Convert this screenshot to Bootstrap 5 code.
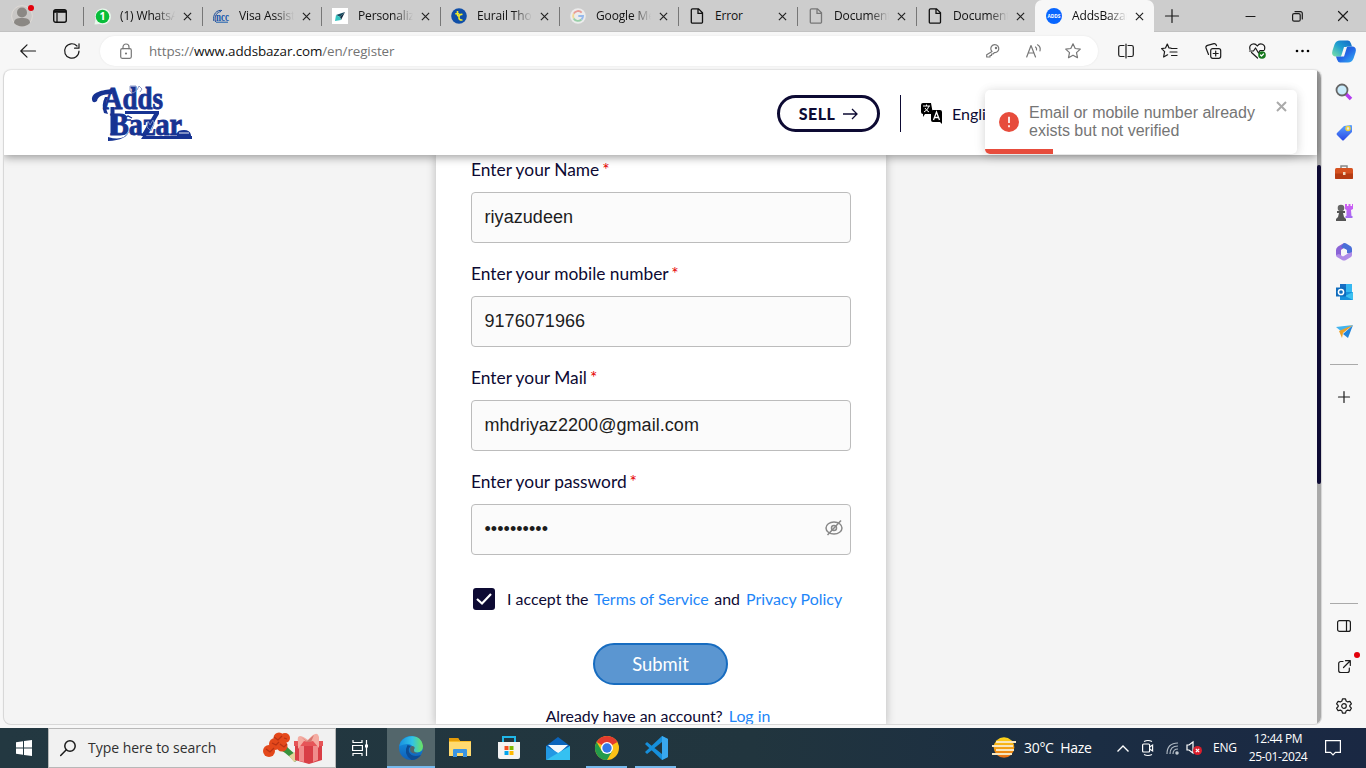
<!DOCTYPE html>
<html lang="en">
<head>
<meta charset="utf-8">
<meta name="viewport" content="width=device-width, initial-scale=1">
<title>AddsBazar</title>
<link href="https://cdn.jsdelivr.net/npm/bootstrap@5.3.0/dist/css/bootstrap.min.css" rel="stylesheet">
<style>
body{width:1366px;height:768px;overflow:hidden;background:#f7f7f7;font-family:"Open Sans","Noto Sans",sans-serif;font-size:12px;line-height:1.2;color:#111}
svg{display:block;flex:none;overflow:visible}
.ln{fill:none;stroke:#1b1b1b;stroke-width:1.2;stroke-linecap:round;stroke-linejoin:round}
/* tab strip */
.tabstrip{height:32px;background:#cdcdcd;box-shadow:inset 0 -1px #c2c2c2}
.strip-tools{width:83px}
.dot-red{width:6px;height:6px;border-radius:50%;background:#e3000b;position:absolute}
.tab-item{width:119px;height:32px;padding-left:11px;position:relative;flex:none}
.tab-item::before{content:"";position:absolute;left:0;top:7px;width:1px;height:19px;background:#777}
.tab-item.current{background:#f7f7f7;border-radius:7px 7px 0 0}
.tab-item.current::before{display:none}
.tab-name{width:55px;margin-left:9px;margin-right:8px;overflow:hidden;white-space:nowrap;line-height:20px;font-size:12px;letter-spacing:-.15px;-webkit-mask-image:linear-gradient(90deg,#000 65%,transparent);mask-image:linear-gradient(90deg,#000 65%,transparent)}
.tab-name.whole{-webkit-mask-image:none;mask-image:none}
/* toolbar */
.toolbar{height:38px}
.address{width:998px;height:30px;border-radius:15px;background:#fff;margin-left:20px;color:#737373;font-size:13.4px;box-shadow:0 0 2px #e4e4e4}
.address b{font-weight:400;color:#111}
.address .ln{stroke:#777}
/* viewport */
.viewport{width:1319px;height:655px;margin-left:3px;border:1px solid #d8d8d8;border-top:0;border-radius:8px;overflow:hidden;background:#f4f4f4;font-family:Lato,sans-serif;color:#0d0a33;box-shadow:0 -1px 1px #e2e2e2}
.site{width:1313px;flex:none}
.scrollbar-rail{width:5px;background:#a9a9a9;padding-top:95px}
.scrollbar-thumb{height:319px;background:#0d0a33;border-radius:3px}
.masthead{height:85px;background:#fff;box-shadow:0 2px 9px rgba(0,0,0,.4);position:relative;z-index:2;padding-left:87px}
.sell{width:103px;height:37px;border:3px solid #0d0a33;border-radius:19px;font-size:16px;font-weight:900;letter-spacing:.5px;margin-left:585px;margin-top:2px}
.rule{width:1px;height:37px;background:#0d0a33;margin:2px 20px 0}
.lang{font-size:16px;padding-top:2px}
.panel{width:450px;height:570px;margin-left:432px;background:#fff;padding:4px 35px 0;box-shadow:0 0 9px rgba(0,0,0,.25);overflow:hidden}
.field{height:104px}
.field label{display:block;height:33px;line-height:22px;font-size:17.35px}
.req{color:#e60000;margin-left:-1.5px}
.field .form-control{height:51px;border:1px solid #bcbcbc;border-radius:4px;background:#fbfbfb;font:18px "Liberation Sans",Arial,sans-serif;padding:0 12.5px;color:#1d1d1d;display:flex;align-items:center;letter-spacing:.05px}
.panel a{color:#1e86f8;text-decoration:none}
.accept{height:22px;margin-top:13px;font-size:15.95px;padding-left:2px;white-space:nowrap}
.tick{width:22px;height:22px;background:#0d0a33;border-radius:3px}
.send{width:135px;height:42px;border:2px solid #176cc0;border-radius:21px;background:#5b96d1;color:#fff;font-size:18.4px;margin:33px 0 0 122px}
.login-line{font-size:15.9px;margin-top:20px;line-height:22px;padding-right:6px}
/* toast */
.notice{position:absolute;z-index:5;left:985px;top:90px;width:312px;height:64px;border-radius:5px;overflow:hidden;background:#fff;color:#757575;font:16px/18px "Liberation Sans",Arial,sans-serif;box-shadow:0 1px 10px rgba(0,0,0,.12),0 2px 15px rgba(0,0,0,.06)}
.notice-bar{width:68px;height:5px;background:#e74c3c;position:absolute;left:0;bottom:0}
/* side rail */
.side{width:44px;height:655px;padding-top:12px}
.side .slot{height:40px;width:44px;display:flex;justify-content:center;align-items:center;position:relative;flex:none}
.side hr{width:28px;margin:0;border-top:1px solid #aaa;opacity:1;flex:none}
/* taskbar */
.taskbar{height:40px;margin-top:3px;background:linear-gradient(90deg,#233841 0,#21353e 55%,#1b2d43 80%,#1a2843);color:#fff}
.searchbox{width:288px;height:40px;background:#f1f1f1;border:1px solid #b8b8b8;color:#303030;font-size:14px}
.app{width:49px;height:40px;display:flex;align-items:center;justify-content:center;position:relative;flex:none}
.app.open::after{content:"";position:absolute;bottom:0;left:4px;right:4px;height:2px;background:#76b9ed}
.app.focus{width:48px;background:#53666b}.app.focus::after{left:0;right:0}
.clock{font-size:12px;line-height:18px;width:62px;letter-spacing:-.4px;white-space:nowrap}
</style>
</head>
<body>
<svg width="0" height="0" class="position-absolute">
 <defs>
  <symbol id="x" viewBox="0 0 10 10"><path d="M1 1l8 8M9 1L1 9" fill="none" stroke="#222" stroke-width="1.3"/></symbol>
  <symbol id="doc" viewBox="0 0 16 16"><path d="M3.5.8h6l4 4v9.2a1.2 1.2 0 0 1-1.2 1.2H3.5A1.2 1.2 0 0 1 2.3 14V2A1.2 1.2 0 0 1 3.5.8zM9 1v4.3h4.4" fill="none" stroke="currentColor" stroke-width="1.3"/></symbol>
  <linearGradient id="gTag" x2="0" y2="1"><stop stop-color="#5aa2ff"/><stop offset="1" stop-color="#2b49e6"/></linearGradient>
  <linearGradient id="gPur" x2="0" y2="1"><stop stop-color="#d45cf5"/><stop offset="1" stop-color="#a06bf0"/></linearGradient>
  <linearGradient id="gCop" x1="1" y1="0" x2="0" y2="1"><stop stop-color="#1466c8"/><stop offset=".5" stop-color="#1f9fd0"/><stop offset="1" stop-color="#7de3a5"/></linearGradient>
  <linearGradient id="gCop2" x2="1" y2="1"><stop stop-color="#1b50c4"/><stop offset=".5" stop-color="#2467e6"/><stop offset="1" stop-color="#35b5f4"/></linearGradient>
  <linearGradient id="gSun" x2="0" y2="1"><stop stop-color="#ffd91a"/><stop offset="1" stop-color="#e76c13"/></linearGradient>
  <linearGradient id="gEdge" x2="1"><stop stop-color="#1890e0"/><stop offset=".55" stop-color="#32c3e6"/><stop offset="1" stop-color="#6de35c"/></linearGradient>
  <linearGradient id="gEdge2" x2="0" y2="1"><stop stop-color="#1597e5"/><stop offset="1" stop-color="#0f5fb8"/></linearGradient>
 </defs>
</svg>

<div class="tabstrip d-flex">
 <div class="strip-tools d-flex align-items-center position-relative">
  <svg width="22" height="22" viewBox="0 0 22 22" style="margin-left:11px"><circle cx="11" cy="11" r="10.4" fill="#c9c7c5" stroke="#dedad6"/><circle cx="11" cy="7.5" r="5" fill="#8b8884"/><path d="M3 18c0-4 3-5 8-5s8 1 8 5c-2 2-5 3.500-8 3.500S5 20 3 18z" fill="#8b8884"/></svg>
  <span class="dot-red" style="left:28px;top:5px"></span>
  <svg width="14" height="14" viewBox="0 0 14 14" style="margin-left:20px"><rect x=".7" y=".7" width="12.600" height="12.600" rx="2" fill="none" stroke="#111" stroke-width="1.400"/><path d="M1 2.500h12" stroke="#111" stroke-width="2.600"/><path d="M4 4v9" stroke="#111" stroke-width="1.300"/></svg>
 </div>
 <div class="tab-item d-flex align-items-center"><svg width="17" height="17" viewBox="0 0 17 17"><path d="M.5 16.500l1-5A8 8 0 1 1 6 16z" fill="#e9f7ec"/><circle cx="8.500" cy="8.500" r="6.800" fill="#08bd3a"/><text x="8.500" y="12.300" font-size="10.500" font-weight="700" fill="#fff" text-anchor="middle">1</text></svg><span class="tab-name">(1) WhatsApp</span><svg width="9" height="9"><use href="#x"/></svg></div>
 <div class="tab-item d-flex align-items-center"><svg width="16" height="16" viewBox="0 0 16 16"><path d="M.8 13C-.5 6 4 1.500 9 2.500M2.500 14C1 8 4 4 8 3.500" stroke="#1d4f9b" fill="none"/><text x="3" y="12.500" font-size="12" font-weight="700" font-family="Liberation Serif" fill="#1557ad" textLength="13" lengthAdjust="spacingAndGlyphs">ncc</text><path d="M3 14.200h12" stroke="#1b5dad"/></svg><span class="tab-name" style="margin-left:10px">Visa Assistance</span><svg width="9" height="9"><use href="#x"/></svg></div>
 <div class="tab-item d-flex align-items-center"><svg width="16" height="16" viewBox="0 0 16 16"><path fill="#fff" d="M0 0h16v16H0z"/><path d="M13 4L4 7l4 2z" fill="#154c60"/><path d="M13 4L8 9l1 3z" fill="#102a40"/><path d="M4 7l-1 6 5-4zM3 13l6-1-1-3z" fill="#35c4c1"/></svg><span class="tab-name" style="margin-left:10px">Personalized</span><svg width="9" height="9"><use href="#x"/></svg></div>
 <div class="tab-item d-flex align-items-center"><svg width="16" height="16" viewBox="0 0 16 16"><circle cx="8" cy="8" r="7.800" fill="#104fa8"/><path d="M6.500 3v3.500q0 2 2 1.500M4.300 5.700h4M11.500 6.500q-3-.5-3.500 2-.5 4 3.500 3.500" stroke="#f4ea29" stroke-width="1.600" fill="none"/></svg><span class="tab-name" style="margin-left:10px">Eurail Thomas</span><svg width="9" height="9"><use href="#x"/></svg></div>
 <div class="tab-item d-flex align-items-center"><svg width="16" height="16" viewBox="0 0 16 16"><circle cx="8" cy="8" r="7.800" fill="#ececec"/><g fill="none" stroke-width="1.900"><path d="M11.700 4.600A5 5 0 0 0 3.700 5.600" stroke="#e89c95"/><path d="M3.700 5.600a5 5 0 0 0 0 4.800" stroke="#f2d995"/><path d="M3.700 10.400A5 5 0 0 0 11.500 11.500" stroke="#98cfa8"/><path d="M11.500 11.500A5 5 0 0 0 13 8H8.300" stroke="#97b9ec"/></g></svg><span class="tab-name" style="margin-left:10px">Google Meet</span><svg width="9" height="9"><use href="#x"/></svg></div>
 <div class="tab-item d-flex align-items-center"><svg width="16" height="16"><use href="#doc"/></svg><span class="tab-name whole" style="margin-left:10px">Error</span><svg width="9" height="9"><use href="#x"/></svg></div>
 <div class="tab-item d-flex align-items-center"><svg width="16" height="16" color="#777"><use href="#doc"/></svg><span class="tab-name" style="margin-left:10px">Document</span><svg width="9" height="9"><use href="#x"/></svg></div>
 <div class="tab-item d-flex align-items-center"><svg width="16" height="16"><use href="#doc"/></svg><span class="tab-name" style="margin-left:10px">Document</span><svg width="9" height="9"><use href="#x"/></svg></div>
 <div class="tab-item current d-flex align-items-center"><svg width="16" height="16" viewBox="0 0 16 16"><circle cx="8" cy="8" r="8" fill="#0866ff"/><text x="1.500" y="10" font-size="5.500" font-weight="700" fill="#fff" textLength="13" lengthAdjust="spacingAndGlyphs">ADDS</text></svg><span class="tab-name" style="margin-left:10px">AddsBazar</span><svg width="9" height="9"><use href="#x"/></svg></div>
 <div class="d-flex align-items-center flex-grow-1">
  <svg class="ln" width="14" height="14" style="margin-left:11px"><path d="M7 .5v13M.5 7h13"/></svg>
  <svg class="ln" width="10" height="10" style="margin-left:67px"><path d="M0 5.500h9"/></svg>
  <svg class="ln" width="11" height="11" style="margin-left:36px"><rect x=".6" y="2.600" width="7.600" height="7.600" rx="1.500"/><path d="M3 .6h5.500a1.800 1.800 0 0 1 1.800 1.800V8"/></svg>
  <svg class="ln" width="10" height="10" style="margin-left:35px"><path d="M.5.500l9 9M9.500.500l-9 9"/></svg>
 </div>
</div>

<div class="toolbar d-flex align-items-center">
 <svg class="ln" width="16" height="14" style="margin-left:20px"><path d="M15.500 7H.8M7 .8L.8 7 7 13.200"/></svg>
 <svg class="ln" width="16" height="16" viewBox="0 0 16 16" style="margin-left:28px"><path d="M15 8a7.200 7.200 0 1 1-2-5M15 .800v4.400h-4.400"/></svg>
 <div class="address d-flex align-items-center">
  <svg class="ln" width="12" height="15" style="margin-left:20px"><rect x=".7" y="4.700" width="10.600" height="9.600" rx="1.500"/><path d="M3 4.700V3a3 3 0 0 1 6 0v1.700"/><circle cx="6" cy="9.500" r=".5"/></svg>
  <span class="url-text" style="margin-left:17px;width:830px;letter-spacing:-.1px">https://<b>www.addsbazar.com</b>/en/register</span>
  <svg class="ln" width="14" height="14" viewBox="0 0 14 14" style="margin-left:7px"><path d="M6 7.500A4 4 0 1 1 8.300 8.600L7 10H5.500v1.500H4V13H.7v-2.300z"/><circle cx="10" cy="4" r=".6"/></svg>
  <svg class="ln" width="16" height="14" viewBox="0 0 16 14" style="margin-left:26px"><path d="M.7 13L5 1.500 9.500 13M2.200 9H8M9.500 3q1.500 1 1 3M11.500.800q3.500 2 2.500 6"/></svg>
  <svg class="ln" width="16" height="16" viewBox="0 0 16 16" style="margin-left:23px"><path d="M8 .8l2.200 4.700 5.100.6-3.800 3.500 1 5.100L8 12.200l-4.500 2.500 1-5.100L.7 6.100l5.100-.6z"/></svg>
 </div>
 <svg class="ln" width="16" height="14" style="margin-left:20px"><path d="M6 1.500H2.500Q.700 1.500.700 3.300v7.400q0 1.800 1.800 1.800H6M10 1.500h3.500q1.800 0 1.800 1.800v7.400q0 1.800-1.800 1.800H10M8 0v14"/></svg>
 <svg class="ln" width="17" height="16" style="margin-left:27px"><path d="M10 5.200l-2-.2L6.300 1 4.500 5 .600 5.700l3 3-1 5.300 4-2.200M10.500 5.500H16M9 9h7M10.500 12.500H16"/></svg>
 <svg class="ln" width="17" height="16" style="margin-left:27px"><rect x="5.700" y="5.700" width="10" height="9.600" rx="2"/><path d="M10.700 8v5M8.200 10.500h5M3.500 11.500L1 5q-.5-2 1.500-2.600L9 .7q2-.3 2.500 2"/></svg>
 <svg class="ln" width="17" height="16" style="margin-left:27px"><path d="M1 6.500C-.5 1 5.500-1 8.300 3 11-1 17 1 15.500 6.500M2.500 9.500l6 5.500M.5 8h4l2-3 3 5 1.500-2.500h4"/><circle cx="13" cy="12" r="3.800" fill="#16791e" stroke="none"/><path d="M11.500 12l1 1 2-2" stroke="#fff"/></svg>
 <svg width="15" height="4" style="margin-left:29px"><circle cx="2" cy="2" r="1.300"/><circle cx="7.500" cy="2" r="1.300"/><circle cx="13" cy="2" r="1.300"/></svg>
 <svg width="24" height="23" viewBox="0 0 24 23" style="margin-left:22px"><path d="M8 .5h8q2 0 3 3l1 3h-4q-3 0-4 3l-1 4q-1 3-3 3H3q-4-1-2.500-6l2-6Q4 .5 8 .5z" fill="url(#gCop)"/><path d="M16 22.500H8q-2 0-3-3l-1-3h4q3 0 4-3l1-4q1-3 3-3h5q4 1 2.500 6l-2 6q-1.500 4-5.500 4z" fill="url(#gCop2)"/><path d="M12 7h3l-3 9.500H9z" fill="#f7f7f7"/></svg>
</div>

<div class="d-flex">
 <main class="viewport d-flex">
  <div class="site">
   <header class="masthead d-flex align-items-center">
    <svg width="101" height="56" viewBox="0 0 101 56" fill="#173392" role="img">
     <g font-family="Liberation Serif" font-weight="700" stroke="#173392" stroke-width=".9">
      <text x="12" y="24" font-size="32" textLength="60" lengthAdjust="spacingAndGlyphs">Adds</text>
      <text x="19" y="50" font-size="31" textLength="72" lengthAdjust="spacingAndGlyphs">Bazar</text>
     </g>
     <path d="M21 4C12 5 0 7 1 15q1 4 5 1 1-7 15-7M14 12q-4 8-1 16l4 1q-4-9 0-17zM34 26h34v3H34zM63 29h5L55 51h-5zM52 51h49v3H50zM17 52q16 5 21-6-2 9-21 10zM86 48q1-3 7-3t7 5v1H86z"/>
     <path d="M19.500 22h4v27h-4z"/>
     <g fill="none" stroke="#7d8fc5" stroke-width=".9"><path d="M39 1h6v5l-3 2-3-2zM46 5l2-4 3 3-2 3M57 36l2 4 3-5 1 4-3 7-4-4z"/><path d="M33 33l4-2 4 2M34 35h6" stroke="#173392" stroke-width="1.300"/><path d="M88 48h10" stroke="#fff"/></g>
    </svg>
    <div class="sell d-flex align-items-center justify-content-center gap-2">SELL <svg width="15" height="12" fill="none" stroke="#0d0a33" stroke-width="1.300"><path d="M0 6h14M9 1l5 5-5 5"/></svg></div>
    <span class="rule"></span>
    <div class="lang d-flex align-items-center"><svg width="22" height="22" viewBox="0 0 22 22"><path d="M2 0h8l2 11H4L2 14v-3Q0 11 0 9V2q0-2 2-2z"/><path d="M2 3h7M5.500 1.500V3M3 9q4-2 5-6M4 5q2 3 4 4" stroke="#fff" fill="none"/><path d="M12 7h7q2 0 2 2v12l-2-2h-7q-2 0-2-2V9q0-2 2-2z"/><path d="M12.500 17l3-8 3 8M13.500 14.500h4" stroke="#fff" stroke-width="1.300" fill="none"/></svg><span style="margin-left:9px;padding-top:1px">Engli</span></div>
   </header>
   <section class="panel">
    <div class="field"><label>Enter your Name <span class="req">*</span></label><div class="form-control">riyazudeen</div></div>
    <div class="field"><label>Enter your mobile number <span class="req">*</span></label><div class="form-control">9176071966</div></div>
    <div class="field"><label>Enter your Mail <span class="req">*</span></label><div class="form-control">mhdriyaz2200@gmail.com</div></div>
    <div class="field"><label>Enter your password <span class="req">*</span></label><div class="form-control" style="padding-right:7px"><span class="flex-grow-1">••••••••••</span><svg width="18" height="16" fill="none" stroke="#888" stroke-width="1.500" style="margin-top:-3px"><ellipse cx="9" cy="8" rx="8" ry="6"/><circle cx="9" cy="8" r="2.500"/><path d="M2.500 15L16 .5"/></svg></div></div>
    <div class="accept d-flex align-items-center"><span class="tick d-flex align-items-center justify-content-center"><svg width="16" height="12" fill="none" stroke="#fff" stroke-width="2.200"><path d="M1 6l5 4.500L15 1"/></svg></span><span style="margin-left:12px">I accept the</span><a href="#" style="margin-left:5.500px">Terms of Service</a><span style="margin-left:5.500px">and</span><a href="#" style="margin-left:6px">Privacy Policy</a></div>
    <div class="send d-flex align-items-center justify-content-center">Submit</div>
    <p class="login-line text-center">Already have an account? <a href="#" style="margin-left:2px">Log in</a></p>
   </section>
  </div>
  <div class="scrollbar-rail"><div class="scrollbar-thumb"></div></div>
 </main>
 <aside class="side d-flex flex-column align-items-center">
  <div class="slot" style="height:20px"><svg width="18" height="18"><path d="M11 11l5 5" stroke="#b43cf0" stroke-width="3.500"/><circle cx="7" cy="7" r="5.500" fill="#c9ebfb" stroke="#666" stroke-width="1.800"/></svg></div>
  <div class="slot" style="margin-top:10px"><svg width="17" height="17"><path d="M8 2l7-1q1 0 1 1v6L8 16q-1 1-2 0L1 11q-1-1 0-2z" fill="url(#gTag)"/><circle cx="12" cy="4.500" r="2" fill="#d9e6ff" stroke="#f0d23b" stroke-width="1.500"/></svg></div>
  <div class="slot"><svg width="18" height="15"><path d="M6 4V1h6v3" fill="none" stroke="#888" stroke-width="1.500"/><rect y="3" width="18" height="11" rx="1.500" fill="#d65220"/><path d="M0 8.500h18V13q0 1-1 1H1q-1 0-1-1z" fill="#b63c13"/><path fill="#f1d9bd" d="M8 7h2.500v3H8z"/></svg></div>
  <div class="slot"><svg width="18" height="18"><path d="M10 1h2v2h1.500V1h2v2H17V1h1v5l-2 1 .5 6h1V15h-7v-2h1V7l-1.500-1z" fill="url(#gPur)"/><circle cx="6" cy="5" r="3.300" fill="#666"/><path d="M2 8h8v2H8l1 4 2 2v2H1v-2l2-2 1-4H2z" fill="#555"/></svg></div>
  <div class="slot"><svg width="18" height="18" viewBox="0 0 18 18"><path d="M9 0L3 3.500Q1 5 1 7v5l5 2V7l6-4z" fill="#8a63d6"/><path d="M9 0q2 0 3 1l4 2.500q1 1 1 2.500v6l-5-2V7L6 4z" fill="#4a6fd8"/><path d="M1 12q0 1.500 1 2l5 3q2 1 4 0l5-3q1-1 1-2V9l-5 2-4 2.500L4 11z" fill="#b08be8"/><path d="M9 5.500l3 1.800v3.500L9 12.500 6 10.800V7.300z" fill="#f7f7f7"/></svg></div>
  <div class="slot"><svg width="17" height="16"><path fill="#35b8f1" d="M4 0h12v8H4z"/><path fill="#176fc4" d="M4 0h6v7H4z"/><path fill="#1791dd" d="M4 8h13v8H4z"/><path fill="#3cc0f0" d="M17 8v8l-8-4z"/><path fill="#0f6cbd" d="M0 3.500h10v9H0z"/><circle cx="5" cy="8" r="2.600" fill="none" stroke="#fff" stroke-width="1.500"/></svg></div>
  <div class="slot"><svg width="17" height="14"><path d="M0 2L17 0 6 7z" fill="#42b4ef"/><path d="M17 0l-5 13-5-4z" fill="#2185dc"/><path d="M17 0L7 8l-1 5-3-7z" fill="#eda128"/></svg></div>
  <hr style="margin-top:12px">
  <div class="slot" style="margin-top:12px"><svg class="ln" width="12" height="12"><path d="M6 .5v11M.5 6h11"/></svg></div>
  <hr style="margin-top:186px">
  <div class="slot" style="margin-top:2px"><svg class="ln" width="14" height="12"><rect x=".6" y=".6" width="12.800" height="10.800" rx="2"/><path d="M9.500.600v10.800"/></svg></div>
  <div class="slot"><svg class="ln" width="13" height="13"><path d="M5 1.500H2.700a2 2 0 0 0-2 2v7a2 2 0 0 0 2 2h6.600a2 2 0 0 0 2-2V8M7.500.700h4.800v4.800M12 1L5.500 7.500"/></svg><span class="dot-red" style="left:32px;top:6px"></span></div>
  <div class="slot"><svg class="ln" width="16" height="16" viewBox="0 0 16 16"><circle cx="8" cy="8" r="2.300"/><path d="M6.500.800h3l.6 2.200 1.600.9 2.200-.6 1.500 2.600L13.800 7.500v1l1.600 1.600-1.500 2.600-2.200-.6-1.600.9-.6 2.200h-3l-.6-2.200-1.600-.9-2.200.6L.6 10.100l1.600-1.600v-1L.6 5.900l1.500-2.600 2.200.6L5.900 3z"/></svg></div>
 </aside>
</div>

<div class="notice d-flex align-items-center">
 <svg width="20" height="20" style="margin-left:14px"><circle cx="10" cy="10" r="10" fill="#e74c3c"/><path d="M10 4.800v6.200M10 13.300v2" stroke="#fff" stroke-width="1.700"/></svg>
 <div class="text-nowrap" style="margin-left:10px;margin-top:-1px;width:227px">Email or mobile number already<br>exists but not verified</div>
 <svg width="11" height="11" style="margin-left:20px;margin-top:-32px" stroke="#aaa" stroke-width="2"><path d="M1 1l9 9M10 1l-9 9"/></svg>
 <div class="notice-bar"></div>
</div>

<footer class="taskbar d-flex align-items-center">
 <div class="app" style="width:48px"><svg width="16" height="16" fill="#fff"><path d="M0 2.200l7-1v6.300H0zM8 1l8-1.100v7.600H8zM0 8.500h7v6.300l-7-1zM8 8.500h8v7.600L8 15z"/></svg></div>
 <div class="searchbox d-flex align-items-center"><svg class="ln" width="16" height="16" style="margin-left:11px;stroke-width:1.500"><circle cx="10" cy="6" r="5.200"/><path d="M6.300 9.700L.7 15.500"/></svg><span style="margin-left:12px;width:172px;padding-top:1px;letter-spacing:-.03px">Type here to search</span>
  <svg width="62" height="36" viewBox="0 0 62 36" style="margin-left:2px"><path d="M12 15q14 6 22 16M18 11q8 10 14 14" stroke="#39933e" stroke-width="3" fill="none"/><path d="M27 26l6-4 3 7-4 3z" fill="#e4d29a"/><g fill="#e4481b"><circle cx="17" cy="8" r="5.500"/><circle cx="23" cy="8" r="5"/><circle cx="7" cy="21" r="6"/><circle cx="20" cy="16" r="5.500"/><circle cx="13" cy="14" r="6"/></g><g fill="none" stroke="#b83214" stroke-width="1.200"><path d="M12 7l4 3 4-4M18 14l4 3 3-3M4 19l4 3 4-4M10 13l4 2 3-3M22 8l3 1"/></g><path d="M33 12h27v18l-13 4-14-4z" fill="#d93e46"/><path d="M32 11h29v5H32z" fill="#e65558"/><path d="M37 16h5v16l-5-1zM51 16h5v14l-5 2z" fill="#f08c8b"/><path d="M46 10Q34 1 36 12v7l6-8 4 1 5-1 6 7V7Q55-1 46 10z" fill="#f4ada3"/><path d="M39 7l6 4 7-6-3 7h-4z" fill="#d7766f"/></svg></div>
 <div class="app" style="width:51px;padding-right:3px"><svg width="16" height="16" fill="none" stroke="#fff" stroke-width="1.200"><path d="M1 0v2.500h9V0M1 16v-2.500h9V16M.6 5.500h9.800v5H.6zM14.500 0v16"/><path fill="#fff" d="M13 4.500h3v3h-3z" stroke="none"/></svg></div>
 <div class="app focus open"><svg width="24" height="24" viewBox="0 0 24 24"><circle cx="12" cy="12" r="12" fill="url(#gEdge2)"/><path d="M.3 10C2-1 22-5 24 10q0 6-6 6.500-5 0-3-4Q12 5 .3 10z" fill="url(#gEdge)"/><path d="M8.500 9q-5 9 4 15 6 0 9.500-5-9 3-12-3-1-4 2-6z" fill="#0d4c94"/><path d="M11.500 11q1.500-2 4 0 .5 1-.5 2.500-.5 3.500 4 3.500-5 1.500-7.500-1.500-1-2 0-4.500z" fill="#53666b"/></svg></div>
 <div class="app"><svg width="22" height="20"><path d="M0 0h9l2 3h11v15H0z" fill="#f9bd27"/><path d="M0 4h22v14H0z" fill="#ffda70"/><path d="M4 19v-7q0-1 1-1h12q1 0 1 1v7h-4v-4H8v4z" fill="#3b95e4"/><path d="M0 0h9l2 3H0z" fill="#e49b08"/></svg></div>
 <div class="app"><svg width="24" height="24"><path d="M6 6V1h12v5" fill="none" stroke="#20b7e8" stroke-width="2"/><path d="M1 6h22v15q0 2-2 2H3q-2 0-2-2z" fill="#f3f3f3"/><path fill="#f25022" d="M7.500 10h4v4h-4z"/><path fill="#7fba00" d="M12.500 10h4v4h-4z"/><path fill="#00a4ef" d="M7.500 15h4v4h-4z"/><path fill="#ffb900" d="M12.500 15h4v4h-4z"/></svg></div>
 <div class="app"><svg width="24" height="23"><path d="M0 9l12-9 12 9v7H0z" fill="#0b64bb"/><path d="M2 8h20L12 17z" fill="#f5f9fc"/><path d="M0 9l14 8L0 23z" fill="#2298e3"/><path d="M24 9L0 23h24z" fill="#35c1f1"/></svg></div>
 <div class="app open"><svg width="24" height="24" viewBox="0 0 24 24"><circle cx="12" cy="12" r="12" fill="#fbc116"/><path d="M12 12L1.600 6A12 12 0 0 1 22.400 6z" fill="#e33b2e"/><path d="M1.600 6A12 12 0 0 0 12 24l5.200-9L12 12 6.800 15z" fill="#239b4b"/><circle cx="12" cy="12" r="6" fill="#fff"/><circle cx="12" cy="12" r="4.700" fill="#3378e8"/></svg></div>
 <div class="app open"><svg width="24" height="24"><path d="M18 0l6 3v18l-6 3L1 8l2-2 15 12V6L3 18l-2-2z" fill="#168fdb"/><path d="M18 0l6 3v18l-6 3z" fill="#39a8ef"/></svg></div>
 <div class="d-flex align-items-center ms-auto" style="width:374px;font-size:14px">
  <svg width="25" height="22"><circle cx="12" cy="10.500" r="10.300" fill="url(#gSun)"/><path d="M4 5h20M0 9h21M4 13h18M0 17h20" stroke="#f7e6bf" stroke-width="1.800"/></svg>
  <span style="margin-left:7px;width:93px;letter-spacing:-.3px;padding-top:1px;white-space:pre">30°C  Haze</span>
  <svg width="12" height="7" fill="none" stroke="#fff" stroke-width="1.400"><path d="M.5 6.500L6 1l5.500 5.500"/></svg>
  <svg width="12" height="16" fill="none" stroke="#fff" stroke-width="1.200" style="margin-left:13px"><rect x=".6" y="4" width="7" height="8" rx="1"/><path d="M7.600 7l3-2v6l-3-2M2 1.500Q6-.5 10 1.500M2 14.500q4 2 8 0"/></svg>
  <svg width="13" height="13" fill="none" stroke="#aeb8c2" stroke-width="1.200" style="margin-left:12px"><path d="M1 12Q1 1 12 1M4 12q0-8 8-8M7 12q0-5 5-5"/><circle cx="11" cy="11" r="1.200" fill="#fff"/></svg>
  <svg width="16" height="14" fill="none" stroke="#fff" stroke-width="1.200" style="margin-left:7px"><path d="M1 4h2l4-3v11L3 9H1z"/><circle cx="11.500" cy="9.500" r="4.500" fill="#db1e2c" stroke="none"/><path d="M9.800 7.800l3.400 3.400m0-3.400l-3.400 3.400"/></svg>
  <span style="font-size:12px;margin-left:11px;width:24px;letter-spacing:-.2px">ENG</span>
  <div class="clock text-center" style="margin-left:10px">12:44 PM<br>25-01-2024</div>
  <svg width="16" height="16" fill="none" stroke="#fff" stroke-width="1.200" style="margin-left:16px"><path d="M.6.600h14.800v11.800h-5L8 15l-2.500-2.600H.6z"/></svg>
 </div>
</footer>
<script src="https://cdn.jsdelivr.net/npm/bootstrap@5.3.0/dist/js/bootstrap.bundle.min.js"></script>
</body>
</html>
